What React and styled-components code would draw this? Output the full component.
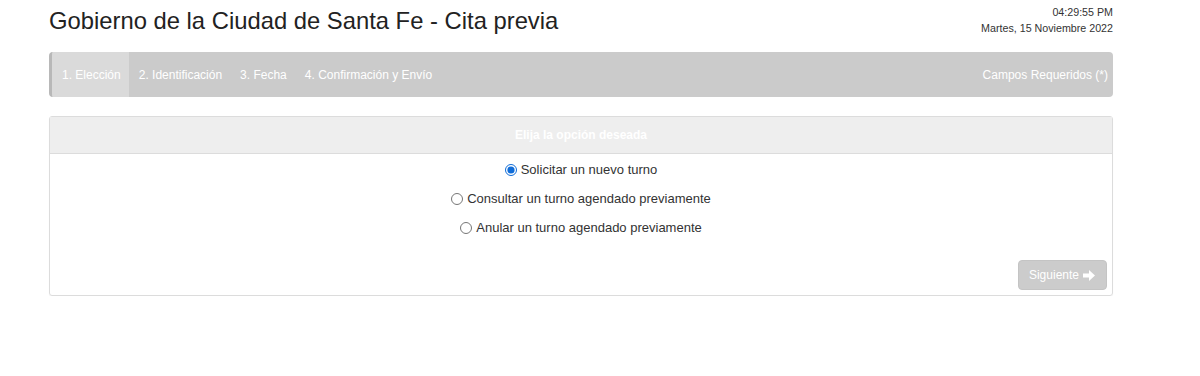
import React, { useState } from "react"
import styled, { createGlobalStyle } from "styled-components"

const GlobalStyle = createGlobalStyle`
  body {
    margin: 0;
    background: #fff;
    font-family: "Liberation Sans", Arial, sans-serif;
    color: #333;
  }
`

const Page = styled.div`
  width: 1064px;
  margin-left: 49px;
`

const Header = styled.header`
  display: flex;
  justify-content: space-between;
  align-items: flex-start;
  height: 52px;
`

const Title = styled.h1`
  margin: 7px 0 0;
  font-size: 23.8px;
  font-weight: normal;
  line-height: 28px;
  color: #222;
`

const Clock = styled.div`
  margin-top: 4px;
  text-align: right;
  font-size: 10.7px;
  line-height: 16px;
  color: #333;
`

const Steps = styled.nav`
  display: flex;
  align-items: stretch;
  height: 45px;
  background: #cbcbcb;
  border-left: 3px solid #b8b8b8;
  border-radius: 4px;
  overflow: hidden;
`

const Step = styled.div`
  display: flex;
  align-items: center;
  padding: 0 8px 0 10px;
  font-size: 12px;
  color: #fff;
  background: ${p => (p.$active ? "#dadada" : "transparent")};
`

const Required = styled.div`
  margin-left: auto;
  display: flex;
  align-items: center;
  padding-right: 5px;
  font-size: 12px;
  color: #fff;
`

const Panel = styled.section`
  margin-top: 19px;
  border: 1px solid #dcdcdc;
  border-radius: 3px;
  box-shadow: 0 1px 1px rgba(0, 0, 0, 0.05);
`

const PanelHeading = styled.div`
  height: 36px;
  display: flex;
  align-items: center;
  justify-content: center;
  background: #eeeeee;
  border-bottom: 1px solid #dcdcdc;
  font-size: 12px;
  font-weight: bold;
  color: #fff;
`

const PanelBody = styled.div`
  padding: 1px 5px 5px;
  display: flex;
  flex-direction: column;
  align-items: center;
`

const Option = styled.label`
  display: flex;
  align-items: center;
  height: 29px;
  font-size: 13px;
  color: #333;
  cursor: pointer;

  input {
    width: 12px;
    height: 12px;
    margin: 0 4px 0 0;
    accent-color: #0f6cd8;
  }
`

const Footer = styled.div`
  align-self: stretch;
  display: flex;
  justify-content: flex-end;
  margin-top: 18px;
`

const NextButton = styled.button`
  display: flex;
  align-items: center;
  gap: 4px;
  height: 30px;
  padding: 0 11px 0 10px;
  background: #cccccc;
  border: 1px solid #c4c4c4;
  border-radius: 4px;
  color: #fff;
  font-family: "Liberation Sans", Arial, sans-serif;
  font-size: 12px;
  cursor: not-allowed;
`

const steps = ["1. Elección", "2. Identificación", "3. Fecha", "4. Confirmación y Envío"]

const options = [
  "Solicitar un nuevo turno",
  "Consultar un turno agendado previamente",
  "Anular un turno agendado previamente",
]

const Arrow = () => (
  <svg width="12" height="11" viewBox="0 0 12 11">
    <path d="M0 3.5h6V0l6 5.5-6 5.5V7.5H0z" fill="#fff" />
  </svg>
)

export default function App() {
  const [choice, setChoice] = useState(0)

  return (
    <>
      <GlobalStyle />
      <Page>
        <Header>
          <Title>Gobierno de la Ciudad de Santa Fe - Cita previa</Title>
          <Clock>
            04:29:55 PM
            <br />
            Martes, 15 Noviembre 2022
          </Clock>
        </Header>
        <Steps>
          {steps.map((s, i) => (
            <Step key={s} $active={i === 0}>{s}</Step>
          ))}
          <Required>Campos Requeridos (*)</Required>
        </Steps>
        <Panel>
          <PanelHeading>Elija la opción deseada</PanelHeading>
          <PanelBody>
            {options.map((o, i) => (
              <Option key={o}>
                <input
                  type="radio"
                  name="opcion"
                  checked={choice === i}
                  onChange={() => setChoice(i)}
                />
                {o}
              </Option>
            ))}
            <Footer>
              <NextButton disabled>
                Siguiente <Arrow />
              </NextButton>
            </Footer>
          </PanelBody>
        </Panel>
      </Page>
    </>
  )
}
